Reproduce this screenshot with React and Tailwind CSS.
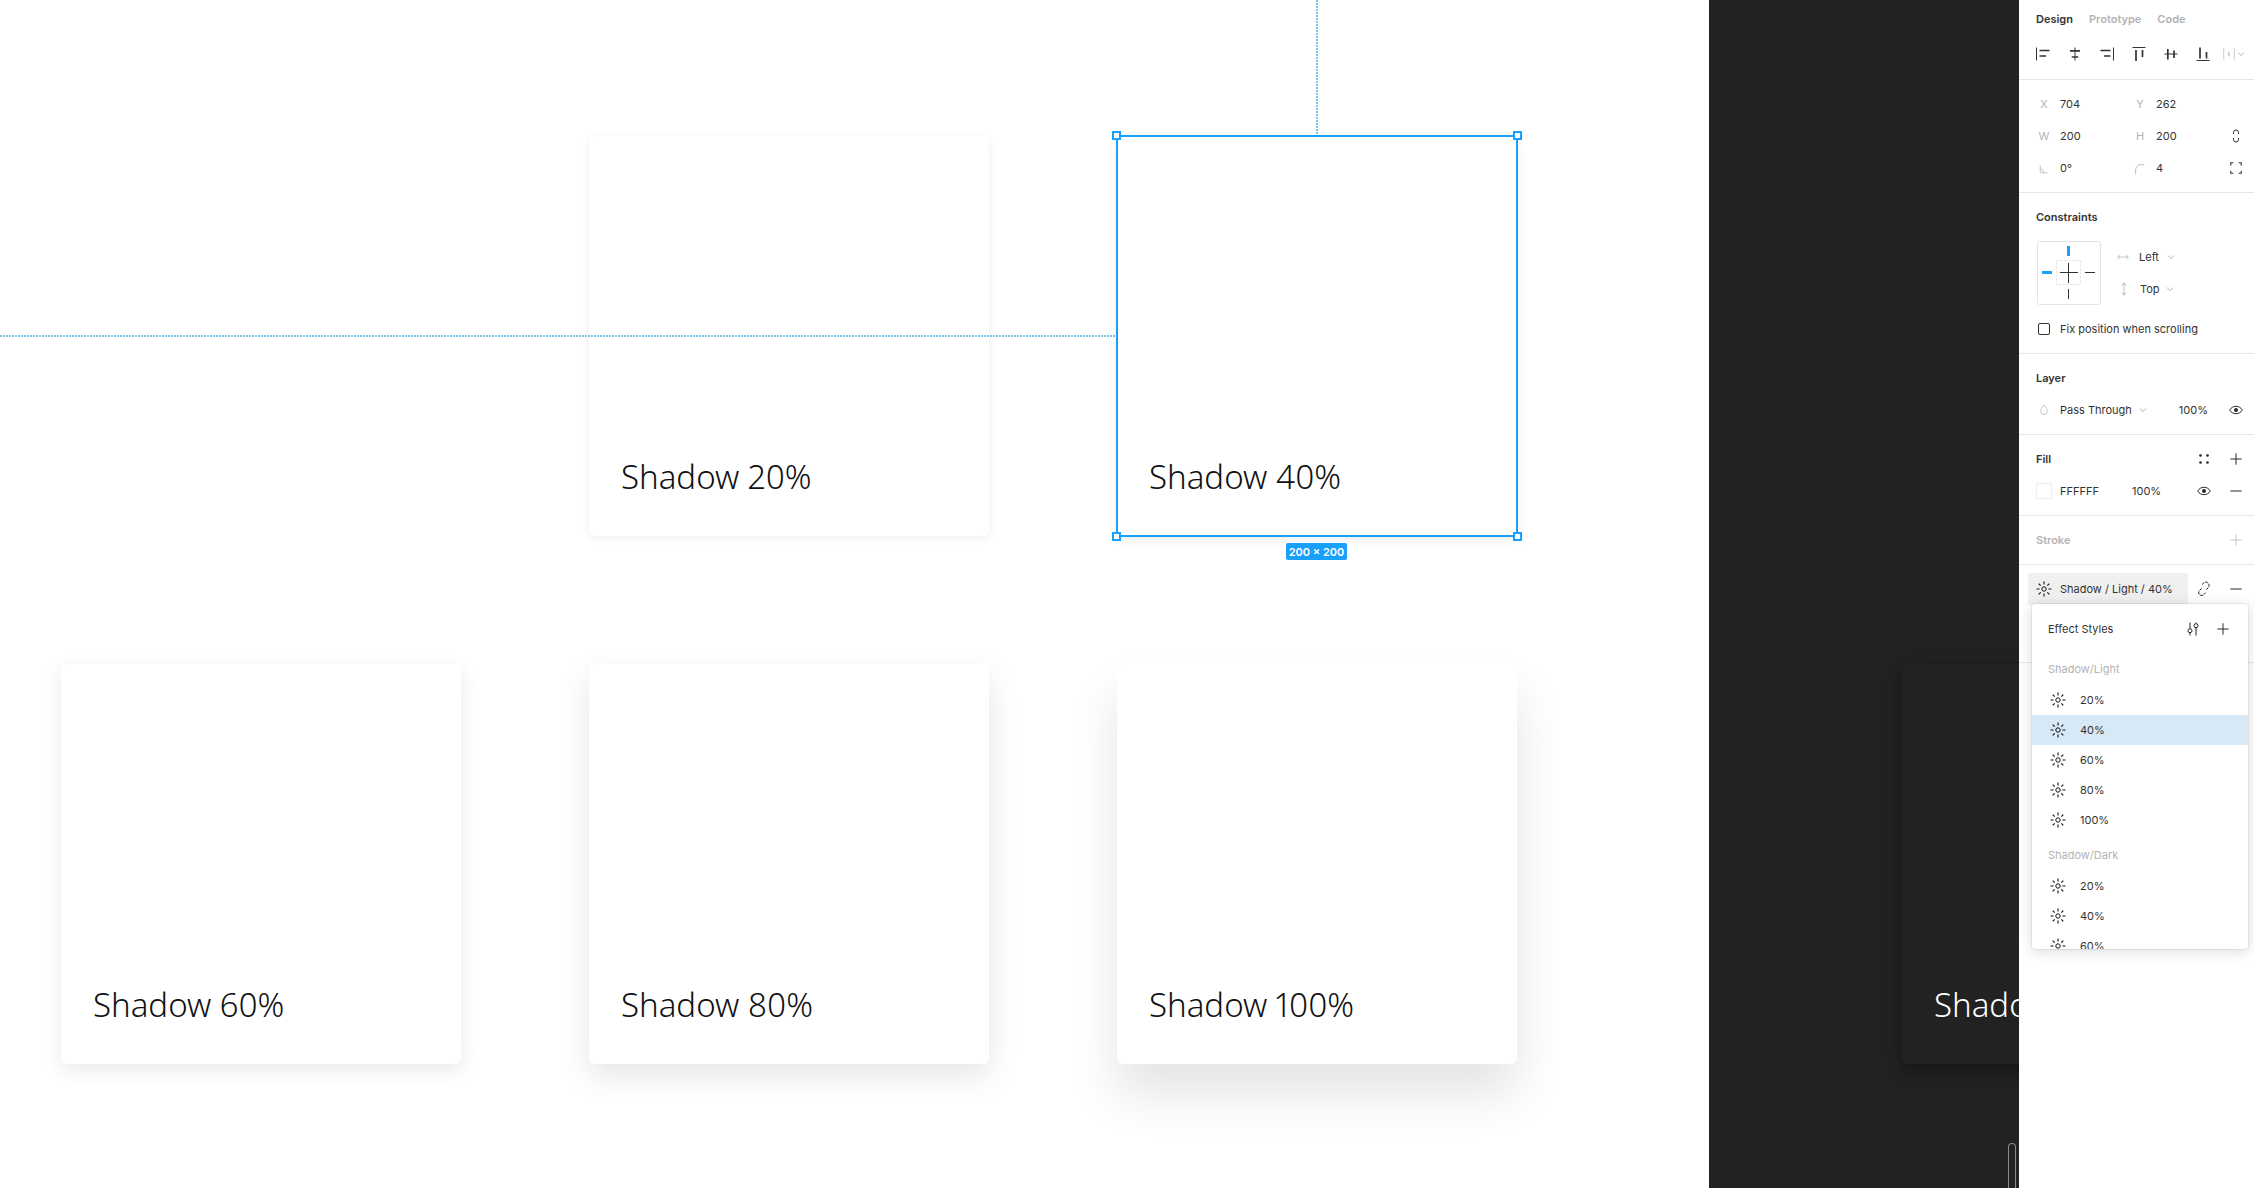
import React from "react";

const Ic = ({ size = 16, children, className = "" }) => (
  <svg width={size} height={size} viewBox="0 0 16 16" fill="none" stroke="currentColor" strokeWidth="1" className={"shrink-0 " + className}>
    {children}
  </svg>
);

const T = ({ children, className = "" }) => <span className={"pt-px " + className}>{children}</span>;

const Sun = () => (
  <Ic size={16} className="text-[#111]">
    <circle cx="8" cy="8" r="2.200" />
    <path d="M8 .5v3M8 12.5v3M.5 8h3M12.5 8h3M2.700 2.700l2 2M11.300 11.300l2 2M13.300 2.700l-2 2M4.700 11.300l-2 2" strokeWidth="1.100" />
  </Ic>
);
const Plus = ({ className = "text-[#222]" }) => (
  <Ic size={14} className={className}><path d="M8 1.500v13M1.500 8h13" strokeWidth="1.100" /></Ic>
);
const Minus = () => (
  <Ic size={14} className="text-[#222]"><path d="M1.500 8h13" strokeWidth="1.100" /></Ic>
);
const Eye = () => (
  <Ic size={14} className="text-[#222]">
    <path d="M.8 8c1.800-2.900 4.200-4.200 7.200-4.200s5.400 1.300 7.200 4.200c-1.800 2.900-4.200 4.200-7.200 4.200S2.600 10.900.8 8z" strokeWidth="1.100" />
    <circle cx="8" cy="8" r="2.200" fill="currentColor" stroke="none" />
  </Ic>
);
const Chev = () => (
  <svg width="8" height="6" viewBox="0 0 8 6" fill="none" stroke="#b3b3b3" strokeWidth="1" className="shrink-0"><path d="M1 1.500l3 3 3-3" /></svg>
);

const alignIcons = [
  <g key="a"><path d="M1.500 1.500v13" /><path d="M4.500 4.500h10M4.500 10h6.500" strokeWidth="1.700" /></g>,
  <g key="b"><path d="M8 1.500v13" /><path d="M3 4.800h10M4.700 11h6.600" strokeWidth="1.700" /></g>,
  <g key="c"><path d="M14.500 1.500v13" /><path d="M1.500 4.500h10M5 10h6.500" strokeWidth="1.700" /></g>,
  <g key="d"><path d="M1.500 1.500h13" /><path d="M5 4v11M11.500 4v7" strokeWidth="1.700" /></g>,
  <g key="e"><path d="M1.500 8h13" /><path d="M4.800 3v10.500M11 4.500v7.500" strokeWidth="1.700" /></g>,
  <g key="f"><path d="M1.500 14.500h13" /><path d="M5 1.500v11M11.500 6v6.500" strokeWidth="1.700" /></g>,
];

const Section = ({ children, className = "" }) => (
  <div className={"border-b border-[#e6e6e6] py-2 " + className}>{children}</div>
);

const IconBox = ({ children }) => <span className="flex w-8 shrink-0 justify-center">{children}</span>;

const Header = ({ title, muted, children }) => (
  <div className={"flex h-8 items-center justify-between pl-[17px] pr-[2px] font-semibold " + (muted ? "text-[#b3b3b3]" : "text-[#333]")}>
    <T>{title}</T>
    {children}
  </div>
);

const Cell = ({ label, value }) => (
  <div className="flex items-center gap-1">
    <span className="flex w-6 justify-center pt-px text-[#b3b3b3]">{label}</span>
    <T>{value}</T>
  </div>
);

const XYRow = ({ a, b, icon }) => (
  <div className="grid h-8 grid-cols-[96px_96px_24px] items-center pl-[13px]">
    {a}
    {b}
    <span className="flex justify-center text-[#333]">{icon}</span>
  </div>
);

const StyleRow = ({ label, active }) => (
  <div className={"flex h-[30px] shrink-0 items-center pl-[18px] " + (active ? "bg-[#d7e8f6]" : "")}>
    <Sun />
    <T className="ml-[14px]">{label}</T>
  </div>
);

const StyleGroup = ({ title, items, active }) => (
  <>
    <div className="flex h-[30px] shrink-0 items-center pl-4 text-[#b3b3b3]"><T>{title}</T></div>
    <div className="mt-px flex flex-col">
      {items.map((i) => (
        <StyleRow key={i} label={i} active={i === active} />
      ))}
    </div>
  </>
);

const Card = ({ title, shadow, selected }) => (
  <div className={"relative flex h-[400px] w-[400px] items-end rounded-[6px] bg-white pb-[37px] pl-8 " + shadow}>
    <span className="text-[33px] font-light leading-[44px] text-[#111] proportional-nums" style={{ fontFamily: '"Noto Sans", sans-serif' }}>{title}</span>
    {selected && (
      <>
        <div className="absolute -inset-px border-2 border-[#18a0fb]" />
        <div className="absolute -left-[5px] -top-[5px] size-[9px] border-2 border-[#18a0fb] bg-white" />
        <div className="absolute -right-[5px] -top-[5px] size-[9px] border-2 border-[#18a0fb] bg-white" />
        <div className="absolute -bottom-[5px] -left-[5px] size-[9px] border-2 border-[#18a0fb] bg-white" />
        <div className="absolute -bottom-[5px] -right-[5px] size-[9px] border-2 border-[#18a0fb] bg-white" />
        <div className="absolute bottom-full left-[199px] mb-px h-[135px] w-[2px] bg-[repeating-linear-gradient(180deg,#7fc3e8_0_2px,transparent_2px_3px)]" />
        <div className="absolute -left-[1117px] top-[199px] h-[2px] w-[1116px] bg-[repeating-linear-gradient(90deg,#7fc3e8_0_2px,transparent_2px_3px)]" />
        <div className="absolute -bottom-[24px] left-[169px] flex h-[17px] w-[61px] items-center justify-center rounded-[2px] bg-[#18a0fb] text-[11px] font-semibold text-white" style={{ fontFamily: "Inter, sans-serif" }}>
          <T>200 × 200</T>
        </div>
      </>
    )}
  </div>
);

export default function App() {
  return (
    <div className="flex h-[1188px] w-[2254px] overflow-hidden bg-white" style={{ fontFamily: "Inter, sans-serif" }}>
      {/* white canvas */}
      <div className="h-full w-[1709px] shrink-0 pl-[61px] pt-[136px]">
        <div className="grid w-[1456px] grid-cols-[400px_400px_400px] gap-x-[128px] gap-y-[128px]">
          <div />
          <Card title="Shadow 20%" shadow="shadow-[0_2px_8px_rgba(0,0,0,0.07)]" />
          <Card title="Shadow 40%" shadow="shadow-[0_4px_14px_rgba(0,0,0,0.07)]" selected />
          <Card title="Shadow 60%" shadow="shadow-[0_6px_20px_rgba(0,0,0,0.09)]" />
          <Card title="Shadow 80%" shadow="shadow-[0_12px_32px_rgba(0,0,0,0.1)]" />
          <Card title="Shadow 100%" shadow="shadow-[0_30px_50px_rgba(0,0,0,0.11)]" />
        </div>
      </div>

      {/* dark canvas */}
      <div className="relative h-full w-[310px] shrink-0 overflow-hidden bg-[#222222] pl-[193px] pt-[664px]">
        <div className="flex h-[400px] w-[400px] items-end rounded-[6px] bg-[#222222] pb-[37px] pl-8 shadow-[0_6px_20px_rgba(0,0,0,0.4)]">
          <span className="text-[33px] font-light leading-[44px] text-white proportional-nums" style={{ fontFamily: '"Noto Sans", sans-serif' }}>Shadow 60%</span>
        </div>
        <div className="absolute bottom-0 left-[299px] h-[45px] w-2 rounded-t-full border border-b-0 border-[#8a8a8a]" />
      </div>

      {/* right panel */}
      <div className="relative h-full w-[235px] shrink-0 bg-white text-[11px] text-[#333]">
        <div className="border-b border-[#e6e6e6] pb-[9px]">
          <div className="flex h-[38px] items-center gap-4 pl-[17px] font-semibold">
            <T>Design</T>
            <T className="text-[#b3b3b3]">Prototype</T>
            <T className="text-[#b3b3b3]">Code</T>
          </div>
          <div className="flex h-8 items-center pl-2 text-[#333]">
            {alignIcons.map((p, i) => (
              <IconBox key={i}><Ic>{p}</Ic></IconBox>
            ))}
            <span className="ml-[3px] flex items-center gap-px text-[#c4c4c4]">
              <Ic size={14}><path d="M2 1.500v13M14 1.500v13" /><path d="M8 5.500v5" strokeWidth="1.700" /></Ic>
              <Chev />
            </span>
          </div>
        </div>

        <Section>
          <XYRow a={<Cell label="X" value="704" />} b={<Cell label="Y" value="262" />} />
          <XYRow
            a={<Cell label="W" value="200" />}
            b={<Cell label="H" value="200" />}
            icon={<Ic><path d="M5.500 6V4.500a2.500 2.500 0 0 1 5 0V6M5.500 10v1.500a2.500 2.500 0 0 0 5 0V10" /></Ic>}
          />
          <XYRow
            a={<Cell label={<Ic size={12}><path d="M3 3v10h10M3 8a5 5 0 0 1 5 5" /></Ic>} value="0°" />}
            b={<Cell label={<Ic size={14}><path d="M3 14V9a6 6 0 0 1 6-6h4" /></Ic>} value="4" />}
            icon={<Ic size={14}><path d="M2 5V2h3M11 2h3v3M14 11v3h-3M5 14H2v-3" strokeWidth="1.300" /></Ic>}
          />
        </Section>

        <Section>
          <Header title="Constraints" />
          <div className="mt-2 flex h-16 pl-[18px]">
            <svg width="64" height="64" viewBox="0 0 64 64" fill="none" className="shrink-0">
              <rect x=".5" y=".5" width="63" height="63" rx="2" stroke="#e3e3e3" />
              <rect x="19.500" y="19.500" width="24" height="24" stroke="#ddd" strokeDasharray="2 2" />
              <path d="M31.500 22v20M23 31.500h18" stroke="#333" />
              <path d="M31.500 5v10M5 31.500h10" stroke="#18a0fb" strokeWidth="3" />
              <path d="M31.500 48v10M48 31.500h10" stroke="#333" />
            </svg>
            <div className="ml-4 flex flex-col">
              <div className="flex h-8 items-center">
                <Ic size={12} className="text-[#b3b3b3]"><path d="M1 8h14M1 8l3-3M1 8l3 3M15 8l-3-3M15 8l-3 3" /></Ic>
                <T className="ml-[10px] mr-[8px]">Left</T>
                <Chev />
              </div>
              <div className="flex h-8 items-center">
                <Ic size={14} className="text-[#b3b3b3]"><path d="M8 1v14M8 1L5.500 4M8 1l2.500 3M8 15l-2.500-3M8 15l2.500-3" /></Ic>
                <T className="ml-[9px] mr-[6px]">Top</T>
                <Chev />
              </div>
            </div>
          </div>
          <div className="mt-2 flex h-8 items-center pl-[19px]">
            <span className="size-3 rounded-[2px] border border-[#333]" />
            <T className="ml-[10px]">Fix position when scrolling</T>
          </div>
        </Section>

        <Section>
          <Header title="Layer" />
          <div className="flex h-8 items-center pl-[13px] pr-[2px]">
            <span className="flex w-6 justify-center">
              <Ic size={12} className="text-[#b3b3b3]"><path d="M8 1.500c2.500 3 4.500 5.300 4.500 8a4.500 4.500 0 0 1-9 0c0-2.700 2-5 4.500-8z" /></Ic>
            </span>
            <T className="ml-1 mr-[7px]">Pass Through</T>
            <Chev />
            <T className="ml-auto mr-3">100%</T>
            <IconBox><Eye /></IconBox>
          </div>
        </Section>

        <Section>
          <Header title="Fill">
            <span className="flex items-center">
              <IconBox>
                <svg width="10" height="10" viewBox="0 0 10 10" fill="#222"><circle cx="1.500" cy="1.500" r="1.300" /><circle cx="8.500" cy="1.500" r="1.300" /><circle cx="1.500" cy="8.500" r="1.300" /><circle cx="8.500" cy="8.500" r="1.300" /></svg>
              </IconBox>
              <IconBox><Plus /></IconBox>
            </span>
          </Header>
          <div className="flex h-8 items-center pl-[17px] pr-[2px]">
            <span className="size-4 border border-[#eee] bg-white" />
            <T className="ml-2 w-[72px]">FFFFFF</T>
            <T>100%</T>
            <span className="ml-auto flex items-center">
              <IconBox><Eye /></IconBox>
              <IconBox><Minus /></IconBox>
            </span>
          </div>
        </Section>

        <Section>
          <Header title="Stroke" muted>
            <IconBox><Plus className="text-[#c4c4c4]" /></IconBox>
          </Header>
        </Section>

        <div className="h-[98px] border-b border-[#e6e6e6] pt-2">
          <div className="flex h-8 items-center pl-[9px]">
            <div className="flex h-8 w-[160px] items-center bg-[#f0f0f0] pl-2">
              <Sun />
              <T className="ml-2">Shadow / Light / 40%</T>
            </div>
            <IconBox>
              <Ic className="text-[#222]"><path d="M6 3.500l1.800-1.600a2.800 2.800 0 0 1 4 0l.5.500a2.800 2.800 0 0 1 0 4L10.500 8.500M5.500 7.500l-2 2a2.800 2.800 0 0 0 0 4l.2.200a2.800 2.800 0 0 0 4 0l1.800-2" strokeDasharray="3 1" /></Ic>
            </IconBox>
            <IconBox><Minus /></IconBox>
          </div>
        </div>

        {/* effect styles popover */}
        <div className="absolute left-[13px] top-[604px] flex h-[345px] w-[216px] flex-col overflow-hidden rounded-[3px] bg-white shadow-[0_2px_14px_rgba(0,0,0,0.15),0_0_0_1px_rgba(0,0,0,0.06)]">
          <div className="flex h-[50px] shrink-0 items-center pl-4 pr-[18px]">
            <T>Effect Styles</T>
            <span className="ml-auto mr-[15px] text-[#222]">
              <Ic><path d="M5 1.500v6M5 12v2.500M11 1.500v1M11 7v7.500" /><circle cx="5" cy="9.700" r="2" /><circle cx="11" cy="4.700" r="2" /></Ic>
            </span>
            <Plus />
          </div>
          <StyleGroup title="Shadow/Light" items={["20%", "40%", "60%", "80%", "100%"]} active="40%" />
          <div className="mt-[5px]">
            <StyleGroup title="Shadow/Dark" items={["20%", "40%", "60%"]} />
          </div>
        </div>
      </div>
    </div>
  );
}
